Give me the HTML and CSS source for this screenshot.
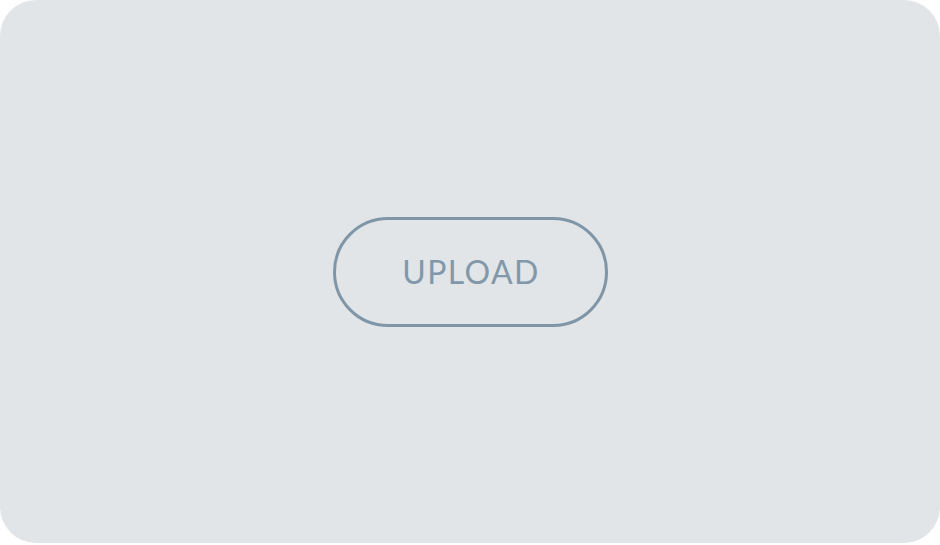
FILE: index.html
```html
<!DOCTYPE html>
<html>
<head>
<meta charset="utf-8">
<link rel="stylesheet" href="styles.css">
</head>
<body>
<div class="card">
  <button class="upload">UPLOAD</button>
</div>
</body>
</html>
```
FILE: styles.css
```css
html, body { margin: 0; padding: 0; background: #ffffff; }
body { width: 940px; height: 545px; }
.card {
  width: 940px;
  height: 543px;
  background: #e1e5e7;
  border-radius: 36px;
  display: flex;
  align-items: center;
  justify-content: center;
}
.upload {
  box-sizing: border-box;
  width: 275px;
  height: 110px;
  border: 3px solid #7f96a9;
  border-radius: 55px;
  background: transparent;
  color: #8198ab;
  font-family: "Lato", "Noto Sans", sans-serif;
  font-size: 32px;
  font-weight: 400;
  letter-spacing: 1.4px;
  padding: 0 0 0 2px;
}
```
